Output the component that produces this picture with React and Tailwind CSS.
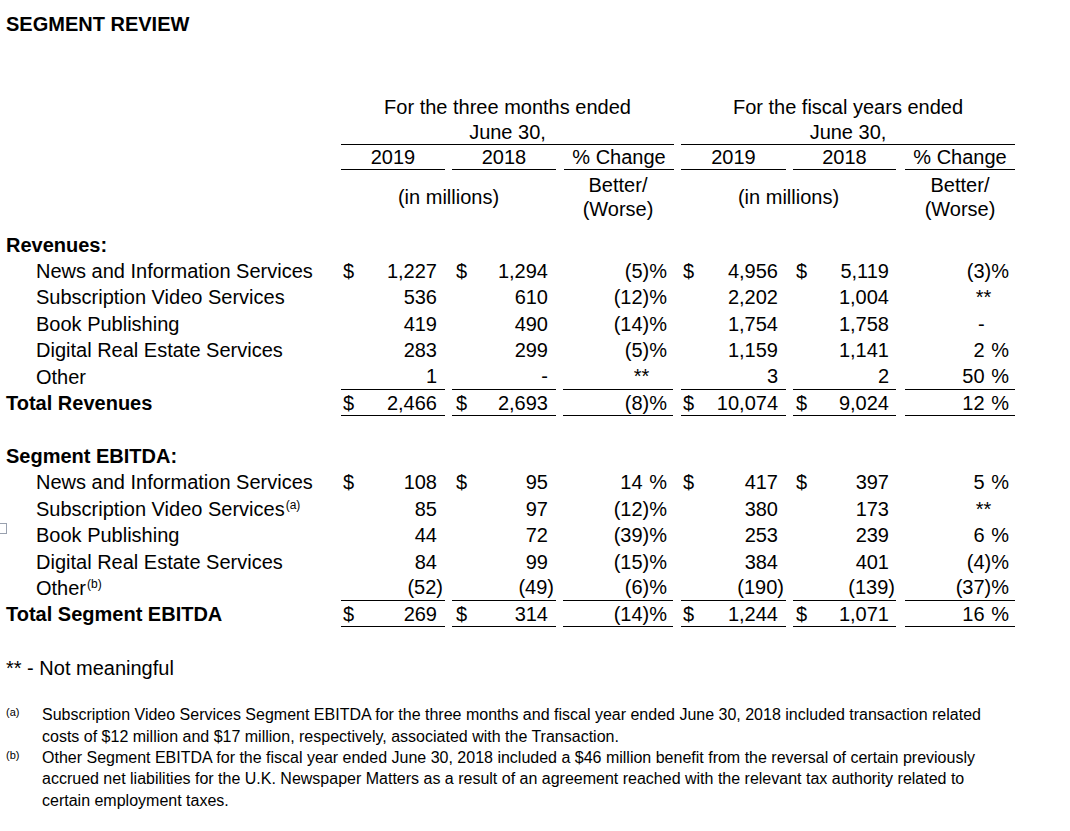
const revenues = [
  { label: 'News and Information Services', dollar: true, v: ['1,227', '1,294', '(5)%', '4,956', '5,119', '(3)%'] },
  { label: 'Subscription Video Services', v: ['536', '610', '(12)%', '2,202', '1,004', '**'] },
  { label: 'Book Publishing', v: ['419', '490', '(14)%', '1,754', '1,758', '-'] },
  { label: 'Digital Real Estate Services', v: ['283', '299', '(5)%', '1,159', '1,141', '2 %'] },
  { label: 'Other', under: true, v: ['1', '-', '**', '3', '2', '50 %'] },
];

const ebitda = [
  { label: 'News and Information Services', dollar: true, v: ['108', '95', '14 %', '417', '397', '5 %'] },
  { label: 'Subscription Video Services', sup: '(a)', v: ['85', '97', '(12)%', '380', '173', '**'] },
  { label: 'Book Publishing', v: ['44', '72', '(39)%', '253', '239', '6 %'] },
  { label: 'Digital Real Estate Services', v: ['84', '99', '(15)%', '384', '401', '(4)%'] },
  { label: 'Other', sup: '(b)', under: true, v: ['(52)', '(49)', '(6)%', '(190)', '(139)', '(37)%'] },
];

// column boxes: width, left gap, padding
const cols = [
  { box: 'w-[104px] pl-[2px] pr-[8px]', pct: false },
  { box: 'w-[104px] ml-[7px] pl-[4px] pr-[8px]', pct: false },
  { box: 'w-[110px] ml-[7px] pr-[6px]', pct: true },
  { box: 'w-[105px] ml-[8px] pl-[2px] pr-[8px]', pct: false },
  { box: 'w-[103px] ml-[7px] pl-[3px] pr-[7px]', pct: false },
  { box: 'w-[110px] ml-[9px] pr-[6px]', pct: true },
];

function Num({ v }) {
  if (v.startsWith('(')) {
    return (
      <span>
        {v.slice(0, -1)}
        <span className="-mr-[6px]">)</span>
      </span>
    );
  }
  return <span>{v}</span>;
}

function Pct({ v }) {
  if (v === '**') return <span>**<span className="invisible">%</span></span>;
  if (v === '-') return <span>-<span className="invisible">)%</span></span>;
  if (v.endsWith(' %')) {
    return (
      <span>
        {v.slice(0, -2)}
        <span className="invisible">)</span>%
      </span>
    );
  }
  return <span>{v}</span>;
}

function Row({ row, total }) {
  const line = row.under || total ? 'border-b border-black' : '';
  return (
    <div className="flex h-[26.4px] items-center">
      <div className={`w-[341px] whitespace-nowrap ${total ? 'pl-[6px] font-bold' : 'pl-[36px]'}`}>
        {row.label}
        {row.sup && <span className="relative -top-[7px] ml-[1px] text-[12px]">{row.sup}</span>}
      </div>
      {row.v.map((v, i) => {
        const c = cols[i];
        return (
          <div key={i} className={`flex h-full items-center justify-between ${c.box} ${line}`}>
            {c.pct ? (
              <>
                <span />
                <Pct v={v} />
              </>
            ) : (
              <>
                <span>{row.dollar || total ? '$' : ''}</span>
                <Num v={v} />
              </>
            )}
          </div>
        );
      })}
    </div>
  );
}

function Heading({ children }) {
  return <div className="flex h-[26.4px] items-center pl-[6px] font-bold">{children}</div>;
}

function PeriodHeader({ title, w, ml, widths }) {
  return (
    <div className={`${w} ${ml}`}>
      <div className="h-[25px] text-center leading-[25px]">{title}</div>
      <div className="h-[25px] border-b border-black text-center leading-[24px]">June 30,</div>
      <div className="flex">
        {['2019', '2018', '% Change'].map((t, i) => (
          <div key={t} className={`h-[25px] border-b border-black text-center leading-[24px] ${widths[i]}`}>
            {t}
          </div>
        ))}
      </div>
    </div>
  );
}

export default function App() {
  return (
    <div className="relative min-h-[831px] w-[1070px] overflow-hidden bg-white font-['Liberation_Sans',Arial,sans-serif] text-[20px] text-black">
      <div className="absolute -left-[4px] top-[523px] h-[11px] w-[11px] border border-gray-400" />

      <div className="pl-[6px] pt-[14px] text-[20px] font-bold leading-[21px]">SEGMENT REVIEW</div>

      {/* column headers */}
      <div className="mt-[59.5px] flex">
        <div className="w-[341px]" />
        <PeriodHeader
          title="For the three months ended"
          w="w-[333px]"
          ml=""
          widths={['w-[104px]', 'w-[104px] ml-[7px]', 'w-[110px] ml-[8px]']}
        />
        <PeriodHeader
          title="For the fiscal years ended"
          w="w-[334px]"
          ml="ml-[7px]"
          widths={['w-[105px]', 'w-[103px] ml-[7px]', 'w-[110px] ml-[9px]']}
        />
      </div>
      <div className="mt-[3px] flex leading-[24px]">
        <div className="w-[341px]" />
        <div className="flex w-[215px] items-center justify-center">(in millions)</div>
        <div className="ml-[7px] w-[110px] text-center">
          Better/
          <br />
          (Worse)
        </div>
        <div className="ml-[8px] flex w-[215px] items-center justify-center">(in millions)</div>
        <div className="ml-[9px] w-[110px] text-center">
          Better/
          <br />
          (Worse)
        </div>
      </div>

      {/* revenues */}
      <div className="mt-[11px]">
        <Heading>Revenues:</Heading>
        {revenues.map((r) => (
          <Row key={r.label} row={r} />
        ))}
        <Row total row={{ label: 'Total Revenues', v: ['2,466', '2,693', '(8)%', '10,074', '9,024', '12 %'] }} />
      </div>

      {/* segment ebitda */}
      <div className="mt-[26.5px]">
        <Heading>Segment EBITDA:</Heading>
        {ebitda.map((r) => (
          <Row key={r.label} row={r} />
        ))}
        <Row total row={{ label: 'Total Segment EBITDA', v: ['269', '314', '(14)%', '1,244', '1,071', '16 %'] }} />
      </div>

      <div className="mt-[27px] flex h-[26.4px] items-center pl-[6px]">** - Not meaningful</div>

      {/* footnotes */}
      <div className="mt-[23.5px] text-[16px] leading-[21.3px]">
        <div className="flex">
          <div className="w-[42px] pl-[6px] text-[11px] leading-[16px]">(a)</div>
          <div className="whitespace-nowrap">
            Subscription Video Services Segment EBITDA for the three months and fiscal year ended June 30, 2018 included transaction related
            <br />
            costs of $12 million and $17 million, respectively, associated with the Transaction.
          </div>
        </div>
        <div className="flex">
          <div className="w-[42px] pl-[6px] text-[11px] leading-[16px]">(b)</div>
          <div className="whitespace-nowrap">
            Other Segment EBITDA for the fiscal year ended June 30, 2018 included a $46 million benefit from the reversal of certain previously
            <br />
            accrued net liabilities for the U.K. Newspaper Matters as a result of an agreement reached with the relevant tax authority related to
            <br />
            certain employment taxes.
          </div>
        </div>
      </div>
    </div>
  );
}
